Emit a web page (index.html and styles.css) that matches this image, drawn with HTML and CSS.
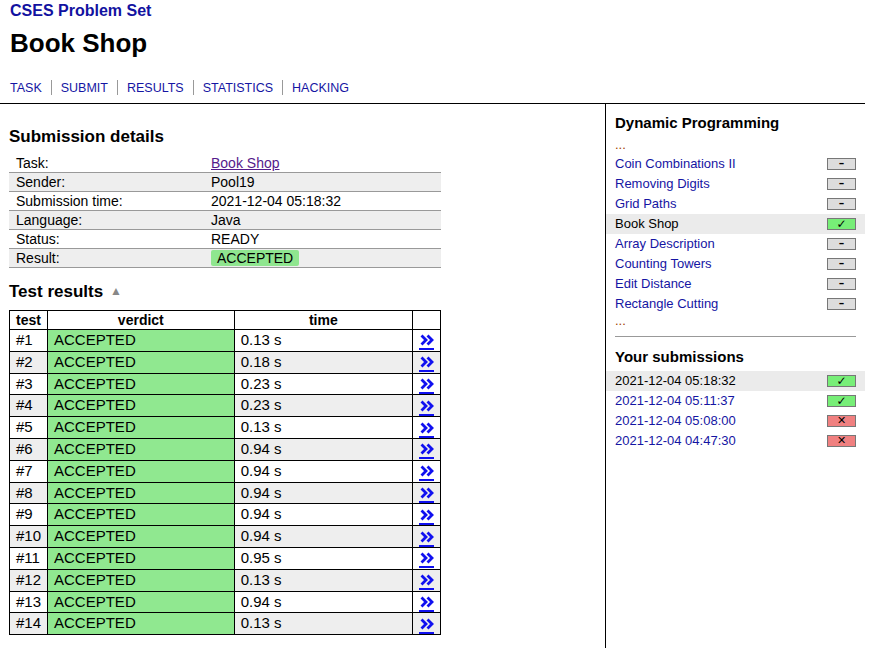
FILE: index.html
```html
<!DOCTYPE html>
<html>
<head>
<meta charset="utf-8">
<title>CSES - Book Shop - Results</title>
<link rel="stylesheet" href="styles.css">
</head>
<body>
<div class="page">
  <header class="header">
    <a class="site-title" href="#">CSES Problem Set</a>
    <h1 class="title">Book Shop</h1>
    <nav class="nav">
      <a href="#">TASK</a><a href="#">SUBMIT</a><a href="#">RESULTS</a><a href="#">STATISTICS</a><a href="#">HACKING</a>
    </nav>
  </header>
  <div class="body">
    <main class="main">
      <h3 class="section">Submission details</h3>
      <table class="details">
        <tr><td class="k">Task:</td><td><a class="visited" href="#">Book Shop</a></td></tr>
        <tr><td class="k">Sender:</td><td>Pool19</td></tr>
        <tr><td class="k">Submission time:</td><td>2021-12-04 05:18:32</td></tr>
        <tr><td class="k">Language:</td><td>Java</td></tr>
        <tr><td class="k">Status:</td><td>READY</td></tr>
        <tr><td class="k">Result:</td><td><span class="badge">ACCEPTED</span></td></tr>
      </table>
      <h3 class="section section2">Test results <span class="caret">&#9650;</span></h3>
      <table class="tests">
        <tr><th class="c-test">test</th><th class="c-verdict">verdict</th><th class="c-time">time</th><th class="c-link"></th></tr>
        <tr><td>#1</td><td class="ok">ACCEPTED</td><td>0.13 s</td><td class="lk"><a href="#" title="details"><svg viewBox="0 0 14 12" width="14" height="12"><polyline points="1.5,1.5 6,6 1.5,10.5"/><polyline points="7.5,1.5 12,6 7.5,10.5"/></svg></a></td></tr>
        <tr><td>#2</td><td class="ok">ACCEPTED</td><td>0.18 s</td><td class="lk"><a href="#" title="details"><svg viewBox="0 0 14 12" width="14" height="12"><polyline points="1.5,1.5 6,6 1.5,10.5"/><polyline points="7.5,1.5 12,6 7.5,10.5"/></svg></a></td></tr>
        <tr><td>#3</td><td class="ok">ACCEPTED</td><td>0.23 s</td><td class="lk"><a href="#" title="details"><svg viewBox="0 0 14 12" width="14" height="12"><polyline points="1.5,1.5 6,6 1.5,10.5"/><polyline points="7.5,1.5 12,6 7.5,10.5"/></svg></a></td></tr>
        <tr><td>#4</td><td class="ok">ACCEPTED</td><td>0.23 s</td><td class="lk"><a href="#" title="details"><svg viewBox="0 0 14 12" width="14" height="12"><polyline points="1.5,1.5 6,6 1.5,10.5"/><polyline points="7.5,1.5 12,6 7.5,10.5"/></svg></a></td></tr>
        <tr><td>#5</td><td class="ok">ACCEPTED</td><td>0.13 s</td><td class="lk"><a href="#" title="details"><svg viewBox="0 0 14 12" width="14" height="12"><polyline points="1.5,1.5 6,6 1.5,10.5"/><polyline points="7.5,1.5 12,6 7.5,10.5"/></svg></a></td></tr>
        <tr><td>#6</td><td class="ok">ACCEPTED</td><td>0.94 s</td><td class="lk"><a href="#" title="details"><svg viewBox="0 0 14 12" width="14" height="12"><polyline points="1.5,1.5 6,6 1.5,10.5"/><polyline points="7.5,1.5 12,6 7.5,10.5"/></svg></a></td></tr>
        <tr><td>#7</td><td class="ok">ACCEPTED</td><td>0.94 s</td><td class="lk"><a href="#" title="details"><svg viewBox="0 0 14 12" width="14" height="12"><polyline points="1.5,1.5 6,6 1.5,10.5"/><polyline points="7.5,1.5 12,6 7.5,10.5"/></svg></a></td></tr>
        <tr><td>#8</td><td class="ok">ACCEPTED</td><td>0.94 s</td><td class="lk"><a href="#" title="details"><svg viewBox="0 0 14 12" width="14" height="12"><polyline points="1.5,1.5 6,6 1.5,10.5"/><polyline points="7.5,1.5 12,6 7.5,10.5"/></svg></a></td></tr>
        <tr><td>#9</td><td class="ok">ACCEPTED</td><td>0.94 s</td><td class="lk"><a href="#" title="details"><svg viewBox="0 0 14 12" width="14" height="12"><polyline points="1.5,1.5 6,6 1.5,10.5"/><polyline points="7.5,1.5 12,6 7.5,10.5"/></svg></a></td></tr>
        <tr><td>#10</td><td class="ok">ACCEPTED</td><td>0.94 s</td><td class="lk"><a href="#" title="details"><svg viewBox="0 0 14 12" width="14" height="12"><polyline points="1.5,1.5 6,6 1.5,10.5"/><polyline points="7.5,1.5 12,6 7.5,10.5"/></svg></a></td></tr>
        <tr><td>#11</td><td class="ok">ACCEPTED</td><td>0.95 s</td><td class="lk"><a href="#" title="details"><svg viewBox="0 0 14 12" width="14" height="12"><polyline points="1.5,1.5 6,6 1.5,10.5"/><polyline points="7.5,1.5 12,6 7.5,10.5"/></svg></a></td></tr>
        <tr><td>#12</td><td class="ok">ACCEPTED</td><td>0.13 s</td><td class="lk"><a href="#" title="details"><svg viewBox="0 0 14 12" width="14" height="12"><polyline points="1.5,1.5 6,6 1.5,10.5"/><polyline points="7.5,1.5 12,6 7.5,10.5"/></svg></a></td></tr>
        <tr><td>#13</td><td class="ok">ACCEPTED</td><td>0.94 s</td><td class="lk"><a href="#" title="details"><svg viewBox="0 0 14 12" width="14" height="12"><polyline points="1.5,1.5 6,6 1.5,10.5"/><polyline points="7.5,1.5 12,6 7.5,10.5"/></svg></a></td></tr>
        <tr><td>#14</td><td class="ok">ACCEPTED</td><td>0.13 s</td><td class="lk"><a href="#" title="details"><svg viewBox="0 0 14 12" width="14" height="12"><polyline points="1.5,1.5 6,6 1.5,10.5"/><polyline points="7.5,1.5 12,6 7.5,10.5"/></svg></a></td></tr>
      </table>
    </main>
    <aside class="side">
      <h4 class="side-title">Dynamic Programming</h4>
      <div class="dots">...</div>
      <ul class="list">
        <li><a href="#">Coin Combinations II</a><span class="box none">&ndash;</span></li>
        <li><a href="#">Removing Digits</a><span class="box none">&ndash;</span></li>
        <li><a href="#">Grid Paths</a><span class="box none">&ndash;</span></li>
        <li class="current"><span>Book Shop</span><span class="box full">&#10003;</span></li>
        <li><a href="#">Array Description</a><span class="box none">&ndash;</span></li>
        <li><a href="#">Counting Towers</a><span class="box none">&ndash;</span></li>
        <li><a href="#">Edit Distance</a><span class="box none">&ndash;</span></li>
        <li><a href="#">Rectangle Cutting</a><span class="box none">&ndash;</span></li>
      </ul>
      <div class="dots dots2">...</div>
      <hr class="rule">
      <h4 class="side-title side-title2">Your submissions</h4>
      <ul class="list">
        <li class="current"><span>2021-12-04 05:18:32</span><span class="box full">&#10003;</span></li>
        <li><a href="#">2021-12-04 05:11:37</a><span class="box full">&#10003;</span></li>
        <li><a href="#">2021-12-04 05:08:00</a><span class="box zero">&#10005;</span></li>
        <li><a href="#">2021-12-04 04:47:30</a><span class="box zero">&#10005;</span></li>
      </ul>
    </aside>
  </div>
</div>
</body>
</html>
```
FILE: styles.css
```css
html, body {
  margin: 0;
  padding: 0;
  background: #fff;
}
body {
  font-family: "Liberation Sans", Arial, sans-serif;
  color: #000;
  height: 648px;
  overflow: hidden;
}
a { color: #1515a3; text-decoration: none; }
.page {
  width: 865px;
}
.header {
  padding: 1px 10px 8px;
  border-bottom: 1px solid #000;
}
.site-title {
  display: block;
  font-size: 16px;
  font-weight: bold;
  line-height: 20px;
  color: #1212a0;
}
.title {
  margin: 7px 0 0;
  font-size: 26px;
  line-height: 30px;
}
.nav {
  margin-top: 22px;
  display: flex;
  font-size: 12.5px;
  line-height: 16px;
}
.nav a {
  padding: 0 9px;
  border-left: 1px solid #999;
  color: #1515a3;
  height: 15px;
}
.nav a:first-child {
  padding-left: 0;
  border-left: none;
}
.body {
  display: flex;
  height: 544px;
}
.main {
  width: 596px;
  padding-left: 9px;
}
.section {
  margin: 23px 0 7px;
  font-size: 17px;
  line-height: 20px;
}
.section2 {
  margin-top: 13px;
  margin-bottom: 8px;
}
.caret {
  font-size: 12px;
  color: #888;
  vertical-align: 2px;
  margin-left: 2px;
}
.details {
  width: 432px;
  border-collapse: collapse;
  font-size: 14px;
}
.details td {
  padding: 0 0 0 6px;
  height: 18px;
  line-height: 17px;
  border-bottom: 1px solid #999;
}
.details td.k { width: 189px; padding-left: 7px; }
.details tr:nth-child(even) td { background: #eee; }
.details a.visited { color: #551a8b; text-decoration: underline; }
.badge {
  background: #8fe68f;
  border-radius: 2px;
  padding: 0 6px;
  display: inline-block;
  line-height: 16px;
}
.tests {
  width: 432px;
  border-collapse: collapse;
  font-size: 15px;
}
.tests th, .tests td {
  border: 1px solid #000;
}
.tests th {
  font-weight: bold;
  font-size: 14px;
  line-height: 17px;
  padding: 1px 0 0;
  text-align: center;
}
.tests th.c-test { width: 31px; padding-left: 6px; text-align: left; }
.tests th.c-verdict { width: 186px; }
.tests th.c-time { width: 178px; }
.tests th.c-link { width: 27px; }
.tests td {
  padding: 2px 6px 2px 6px;
  line-height: 16.8px;
}
.tests tr:nth-child(odd) td { background: #eee; }
.tests td.ok, .tests tr:nth-child(odd) td.ok { background: #90e890; }
.tests td.lk { text-align: center; padding: 0; }
.tests td.lk a {
  display: inline-block;
  line-height: 0;
  padding: 2px 0 2px 1px;
  border-bottom: 2px solid #1010f0;
  vertical-align: middle;
  margin-top: 2px;
}
.tests td.lk svg {
  display: block;
  fill: none;
  stroke: #1010f0;
  stroke-width: 2.8;
  stroke-linecap: butt;
  stroke-linejoin: miter;
}
.side {
  width: 259px;
  border-left: 1px solid #000;
  font-size: 13px;
}
.side-title {
  margin: 10px 9px 4px;
  font-size: 15px;
  line-height: 18px;
}
.side-title2 {
  margin-top: 11px;
  margin-bottom: 5px;
}
.dots {
  padding: 0 9px;
  line-height: 18px;
  color: #a04000;
}
.dots2 { line-height: 14px; }
.list {
  list-style: none;
  margin: 0;
  padding: 0;
}
.list li {
  display: flex;
  justify-content: space-between;
  align-items: center;
  height: 20px;
  padding: 0 9px 0 9px;
  line-height: 20px;
}
.list li.current { background: #ebebeb; }
.box {
  width: 27px;
  height: 10px;
  border: 1px solid #777;
  font-size: 11px;
  line-height: 10px;
  text-align: center;
  font-weight: bold;
  font-family: "DejaVu Sans", sans-serif;
}
.box.none { background: #ddd; }
.box.full { background: #77ee77; font-weight: normal; font-size: 12px; }
.box.zero { background: #f08080; font-weight: normal; font-size: 11px; }
.rule {
  margin: 8px 9px 0;
  border: none;
  border-top: 1px solid #999;
  height: 0;
}
```
